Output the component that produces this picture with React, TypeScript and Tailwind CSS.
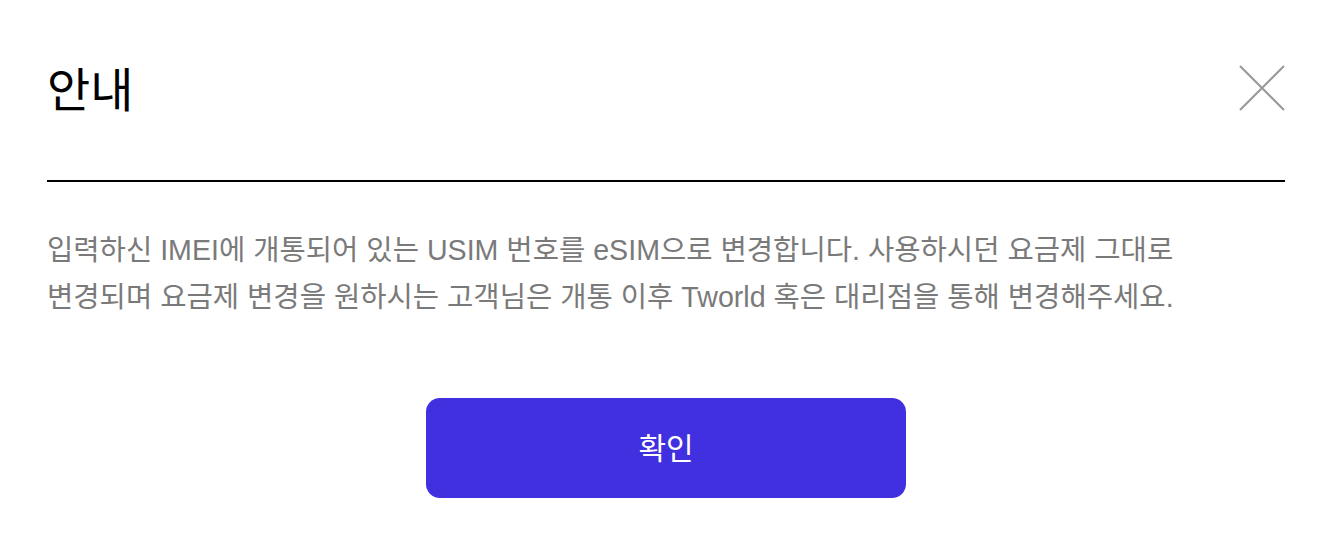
export default function App() {
  return (
    <div
      className="w-[1330px] h-[536px] bg-white pl-[47px] pr-[45px] pt-[60px]"
      style={{ fontFamily: '"Liberation Sans", "Noto Sans CJK KR", sans-serif' }}
    >
      <div className="flex items-start justify-between border-b-2 border-black pb-[58px]">
        <h1 className="text-[47px] leading-[62px] text-black">안내</h1>
        <button className="mt-[5px] h-[46px] w-[46px]" aria-label="닫기">
          <svg viewBox="0 0 46 46" className="h-[46px] w-[46px]">
            <path d="M1 1 L45 45 M45 1 L1 45" stroke="#9a9a9a" strokeWidth="2.2" fill="none" />
          </svg>
        </button>
      </div>
      <p className="mt-[45px] text-[28.6px] leading-[47px] text-[#7a7a7a]">
        입력하신 IMEI에 개통되어 있는 USIM 번호를 eSIM으로 변경합니다. 사용하시던 요금제 그대로
        <br />
        변경되며 요금제 변경을 원하시는 고객님은 개통 이후 Tworld 혹은 대리점을 통해 변경해주세요.
      </p>
      <div className="mt-[77px] flex justify-center">
        <button className="h-[100px] w-[480px] rounded-[14px] bg-[#4130df] text-[30px] text-white">
          확인
        </button>
      </div>
    </div>
  );
}
